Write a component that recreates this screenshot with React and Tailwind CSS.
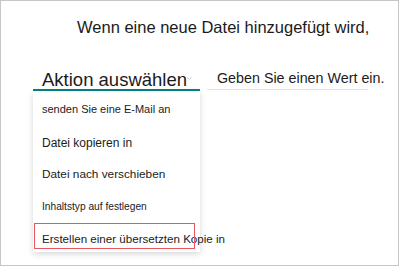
import { ChevronDown } from 'lucide-react';

const items = [
  { label: 'senden Sie eine E-Mail an', size: 'text-[11px]', h: 'h-[36px] leading-[36px]' },
  { label: 'Datei kopieren in', size: 'text-[12px]', h: 'h-[32px] leading-[32px]' },
  { label: 'Datei nach verschieben', size: 'text-[11.8px]', h: 'h-[30px] leading-[30px]' },
  { label: 'Inhaltstyp auf festlegen', size: 'text-[10.2px]', h: 'h-[36px] leading-[36px]' },
  { label: 'Erstellen einer übersetzten Kopie in', size: 'text-[11.6px]', h: 'h-[27px] leading-[27px]' },
];

export default function App() {
  return (
    <div className="w-[399px] h-[266px] border border-[#c6c6c6] bg-white text-[#1b1b1b] font-['Liberation_Sans',Arial,sans-serif]">
      <div className="pl-[76px] pt-[17px] text-[16.5px] leading-[19px] whitespace-nowrap">
        Wenn eine neue Datei hinzugefügt wird,
      </div>

      {/* Action row */}
      <div className="mt-[30px] flex items-end gap-[7px] pl-[32px]">
        <div className="relative w-[167px] border-b-2 border-[#038387] pl-[9px] text-[18.5px] leading-[19px] whitespace-nowrap">
          Aktion auswählen
          <ChevronDown className="absolute left-[153px] top-[5px] text-[#9a9a9a]" size={7} strokeWidth={2} />

          {/* Dropdown menu, sits under the teal underline */}
          <div className="absolute left-0 top-[21px] w-[167px] h-[161px] bg-white shadow-[0_2px_6px_rgba(0,0,0,0.16)]">
            {items.map((it) => (
              <div key={it.label} className={`${it.h} ${it.size} pl-[9px] whitespace-nowrap text-[#1b1b1b]`}>
                {it.label}
              </div>
            ))}
            <div className="absolute left-[1px] top-[132px] w-[161px] h-[26px] border-[1.5px] border-[#e8565e] pointer-events-none" />
          </div>
        </div>

        <div className="w-[161px] mb-[1px] border-b border-[#e1e1e1] pl-[10px] text-[14.3px] leading-[22px] whitespace-nowrap">
          Geben Sie einen Wert ein.
        </div>
      </div>
    </div>
  );
}
